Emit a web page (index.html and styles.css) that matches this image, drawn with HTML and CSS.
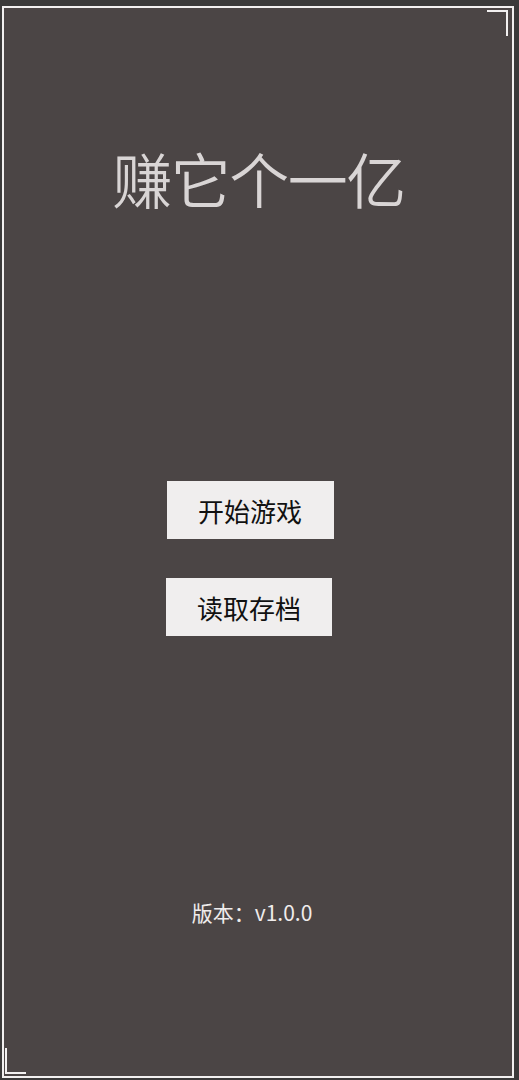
FILE: index.html
```html
<!DOCTYPE html>
<html lang="zh">
<head>
<meta charset="utf-8">
<title>赚它个一亿</title>
<link rel="stylesheet" href="styles.css">
</head>
<body>
<div class="frame">
  <span class="corner corner-tr"></span>
  <span class="corner corner-bl"></span>
  <h1 class="title">赚它个一亿</h1>
  <div class="menu">
    <button class="btn btn-start">开始游戏</button>
    <button class="btn btn-load">读取存档</button>
  </div>
  <p class="version">版本：v1.0.0</p>
</div>
</body>
</html>
```
FILE: styles.css
```css
html, body {
  margin: 0;
  padding: 0;
  background: #3b3a3a;
}
body {
  width: 519px;
  height: 1080px;
  padding: 6px 5px 2px 2px;
  box-sizing: border-box;
  font-family: "Noto Sans CJK SC", "Noto Sans", "DejaVu Sans", sans-serif;
}
.frame {
  position: relative;
  height: 100%;
  box-sizing: border-box;
  border: 2px solid #f2f0f0;
  background: #4b4545;
  display: flex;
  flex-direction: column;
  align-items: center;
}
.corner {
  position: absolute;
  width: 19px;
  height: 24px;
}
.corner-tr {
  top: 2px;
  right: 4px;
  border-top: 2px solid #f2f0f0;
  border-right: 2px solid #f2f0f0;
}
.corner-bl {
  bottom: 2px;
  left: 1px;
  border-bottom: 2px solid #f2f0f0;
  border-left: 2px solid #f2f0f0;
}
.title {
  margin: 140px 0 0 0;
  font-size: 60px;
  line-height: 60px;
  font-weight: 350;
  color: #d9d5d5;
  letter-spacing: -1.5px;
  padding-left: 1px;
}
.menu {
  margin-top: 273px;
  display: flex;
  flex-direction: column;
  align-items: center;
  gap: 39px;
  padding-right: 18px;
}
.btn {
  border: none;
  background: #f0eeee;
  color: #111;
  font-family: inherit;
  font-size: 26px;
  height: 58px;
  padding: 0;
  margin: 0;
}
.btn-start {
  width: 167px;
  margin-left: 2px;
}
.btn-load {
  width: 166px;
}
.version {
  margin: 266px 0 0 0;
  font-size: 21px;
  line-height: 20px;
  color: #f0ecec;
  padding-right: 12px;
}
```
